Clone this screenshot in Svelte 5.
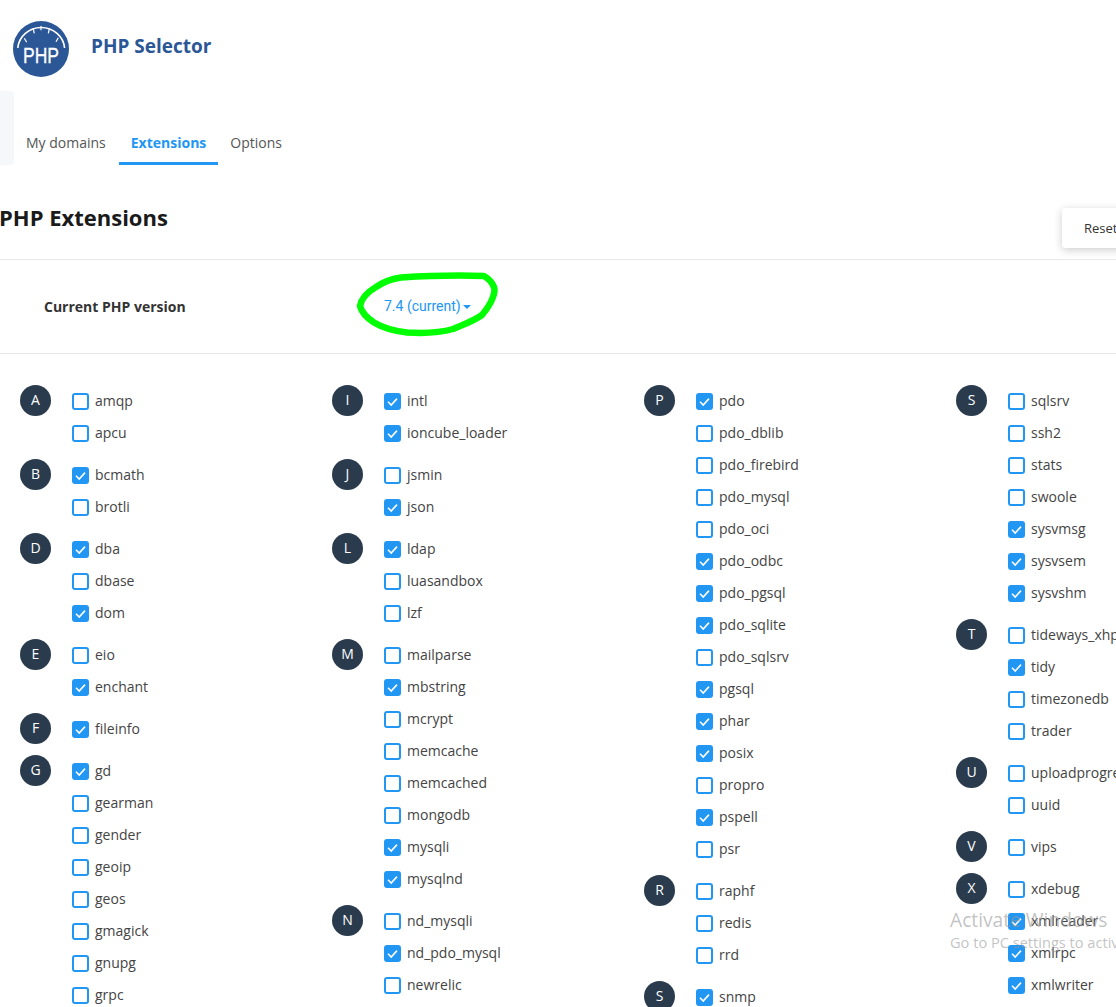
<script>
  const columns = [
    [
      { letter: 'A', items: [['amqp', 0], ['apcu', 0]] },
      { letter: 'B', items: [['bcmath', 1], ['brotli', 0]] },
      { letter: 'D', items: [['dba', 1], ['dbase', 0], ['dom', 1]] },
      { letter: 'E', items: [['eio', 0], ['enchant', 1]] },
      { letter: 'F', items: [['fileinfo', 1]] },
      { letter: 'G', items: [['gd', 1], ['gearman', 0], ['gender', 0], ['geoip', 0], ['geos', 0], ['gmagick', 0], ['gnupg', 0], ['grpc', 0]] }
    ],
    [
      { letter: 'I', items: [['intl', 1], ['ioncube_loader', 1]] },
      { letter: 'J', items: [['jsmin', 0], ['json', 1]] },
      { letter: 'L', items: [['ldap', 1], ['luasandbox', 0], ['lzf', 0]] },
      { letter: 'M', items: [['mailparse', 0], ['mbstring', 1], ['mcrypt', 0], ['memcache', 0], ['memcached', 0], ['mongodb', 0], ['mysqli', 1], ['mysqlnd', 1]] },
      { letter: 'N', items: [['nd_mysqli', 0], ['nd_pdo_mysql', 1], ['newrelic', 0]] }
    ],
    [
      { letter: 'P', items: [['pdo', 1], ['pdo_dblib', 0], ['pdo_firebird', 0], ['pdo_mysql', 0], ['pdo_oci', 0], ['pdo_odbc', 1], ['pdo_pgsql', 1], ['pdo_sqlite', 1], ['pdo_sqlsrv', 0], ['pgsql', 1], ['phar', 1], ['posix', 1], ['propro', 0], ['pspell', 1], ['psr', 0]] },
      { letter: 'R', items: [['raphf', 0], ['redis', 0], ['rrd', 0]] },
      { letter: 'S', items: [['snmp', 1]] }
    ],
    [
      { letter: 'S', items: [['sqlsrv', 0], ['ssh2', 0], ['stats', 0], ['swoole', 0], ['sysvmsg', 1], ['sysvsem', 1], ['sysvshm', 1]] },
      { letter: 'T', items: [['tideways_xhprof', 0], ['tidy', 1], ['timezonedb', 0], ['trader', 0]] },
      { letter: 'U', items: [['uploadprogress', 0], ['uuid', 0]] },
      { letter: 'V', items: [['vips', 0]] },
      { letter: 'X', items: [['xdebug', 0], ['xmlreader', 1], ['xmlrpc', 1], ['xmlwriter', 1]] }
    ]
  ];
</script>

<div class="page">
  <header class="top">
    <svg class="logo" viewBox="0 0 56 56" width="56" height="56">
      <circle cx="28" cy="28" r="28" fill="#2b5797" />
      <path d="M4.8 27 A23.5 22.5 0 0 1 51.6 27" fill="none" stroke="#fff" stroke-width="1.6" />
      <path d="M11.3 17.3 L13.7 21.3 M20.3 8 L21.3 12.3 M28 5 L28 9.2 M36.3 8 L35.3 12.3 M45.3 16.7 L43 20.7" stroke="#fff" stroke-width="1.2" />
      <text x="10" y="42" textLength="36" lengthAdjust="spacingAndGlyphs" class="logo-text">PHP</text>
    </svg>
    <h1>PHP Selector</h1>
  </header>

  <div class="nav-row">
    <div class="stub"></div>
    <nav class="tabs">
      <span class="tab">My domains</span>
      <span class="tab active">Extensions</span>
      <span class="tab">Options</span>
    </nav>
  </div>

  <div class="title-row">
    <h2>PHP Extensions</h2>
    <button class="reset">Reset to default</button>
  </div>

  <div class="version-row">
    <span class="version-label">Current PHP version</span>
    <span class="version-value">7.4 (current)<i class="caret"></i></span>
  </div>

  <div class="grid">
    {#each columns as groups}
      <div class="col">
        {#each groups as group}
          <div class="group">
            <span class="badge">{group.letter}</span>
            <ul>
              {#each group.items as [name, on]}
                <li>
                  <span class="box" class:on={on}>
                    {#if on}
                      <svg viewBox="0 0 17 17" width="17" height="17"><path d="M4 8.8 L7.2 12 L13 5.6" fill="none" stroke="#fff" stroke-width="1.6" /></svg>
                    {/if}
                  </span>
                  <span class="name">{name}</span>
                </li>
              {/each}
            </ul>
          </div>
        {/each}
      </div>
    {/each}
  </div>

  <svg class="scribble" viewBox="0 0 1116 1007" width="1116" height="1007">
    <path d="M484 276 C455 275 425 276 401 277.500 C389 279 382 283 376 287 C366 293 361 300 360 306 C362 313 367 318 374 322.500 C383 328 394 331 407 332.500 C423 333.500 441 332.500 453 329 C462 325 472 322 482 315 C487 309 491 303 493 297 C494.500 293 495 290 494 287 C492 282 489 279 484 276 Z" fill="none" stroke="#00ff00" stroke-width="6.500" stroke-linejoin="round" />
  </svg>

  <div class="watermark">
    <div class="wm-big">Activate Windows</div>
    <div class="wm-small">Go to PC settings to activate Windows.</div>
  </div>
</div>

<style>
  :global(body) {
    margin: 0;
    background: #fff;
  }

  .page {
    position: relative;
    width: 1116px;
    height: 1007px;
    overflow: hidden;
    font-family: "Open Sans", sans-serif;
    color: #333;
  }

  .top {
    display: flex;
    align-items: center;
    gap: 22px;
    padding: 21px 0 0 13px;
    height: 56px;
  }

  .logo {
    flex: none;
  }

  .logo-text {
    font-family: "Liberation Sans", sans-serif;
    font-size: 21.500px;
    fill: #fff;
    stroke: #fff;
    stroke-width: 0.3px;
  }

  h1 {
    margin: 0 0 6px;
    font-size: 19px;
    font-weight: 700;
    color: #2b5797;
  }

  .nav-row {
    display: flex;
    height: 74px;
    margin-top: 14px;
  }

  .stub {
    width: 14px;
    background: #f6f7f9;
    border-radius: 0 3px 3px 0;
  }

  .tabs {
    display: flex;
    align-items: flex-end;
    margin-left: 12px;
  }

  .tab {
    font-size: 14px;
    line-height: 19px;
    color: #555;
    padding-bottom: 13px;
    margin-right: 25px;
  }

  .tab.active {
    margin: 0 12px 0 -12px;
    padding: 0 12px 10px;
    border-bottom: 3px solid #2196f3;
    color: #2196f3;
    font-weight: 700;
  }

  .title-row {
    display: flex;
    justify-content: space-between;
    align-items: flex-start;
    height: 94px;
    border-bottom: 1px solid #e8e8e8;
  }

  h2 {
    margin: 37px 0 0 -1px;
    font-size: 22px;
    line-height: 30px;
    font-weight: 700;
    color: #1a1a1a;
  }

  .reset {
    flex: none;
    width: 170px;
    height: 40px;
    margin: 43px -116px 0 0;
    padding: 0 0 0 22px;
    border: none;
    border-radius: 3px;
    background: #fff;
    box-shadow: 0 2px 8px rgba(0, 0, 0, 0.2);
    font-family: inherit;
    font-size: 13px;
    color: #333;
    text-align: left;
    white-space: nowrap;
  }

  .version-row {
    display: flex;
    align-items: center;
    height: 93px;
    padding-left: 44px;
    border-bottom: 1px solid #e8e8e8;
  }

  .version-label {
    width: 340px;
    font-size: 14px;
    font-weight: 700;
    color: #333;
  }

  .version-value {
    margin-bottom: 2px;
    font-family: Roboto, sans-serif;
    font-size: 14px;
    color: #2196f3;
  }

  .caret {
    display: inline-block;
    margin-left: 2px;
    vertical-align: 2px;
    border-left: 4px solid transparent;
    border-right: 4px solid transparent;
    border-top: 4px solid #2196f3;
  }

  .grid {
    display: grid;
    grid-template-columns: repeat(4, 312px);
    padding: 31px 0 0 20px;
  }

  .group {
    display: flex;
    margin-bottom: 10px;
  }

  .badge {
    flex: none;
    width: 31px;
    height: 31px;
    border-radius: 50%;
    background: #2a3b4d;
    color: #fff;
    font-size: 14px;
    line-height: 29px;
    text-align: center;
  }

  ul {
    list-style: none;
    margin: 0;
    padding: 0 0 0 21px;
  }

  li {
    display: flex;
    align-items: center;
    height: 32px;
    white-space: nowrap;
  }

  .box {
    flex: none;
    box-sizing: border-box;
    width: 17px;
    height: 17px;
    border: 2px solid #2196f3;
    border-radius: 3px;
    background: #fff;
    position: relative;
  }

  .box.on {
    background: #2196f3;
  }

  .box svg {
    position: absolute;
    left: -2px;
    top: -2px;
  }

  .name {
    margin-left: 6px;
    padding-bottom: 2px;
    font-size: 14px;
    color: #444;
  }

  .scribble {
    position: absolute;
    left: 0;
    top: 0;
    pointer-events: none;
  }

  .watermark {
    position: absolute;
    left: 950px;
    top: 907px;
    color: rgba(150, 150, 150, 0.58);
    white-space: nowrap;
    pointer-events: none;
  }

  .wm-big {
    font-size: 19.200px;
    line-height: 25px;
  }

  .wm-small {
    font-size: 14.600px;
    line-height: 20px;
  }
</style>
